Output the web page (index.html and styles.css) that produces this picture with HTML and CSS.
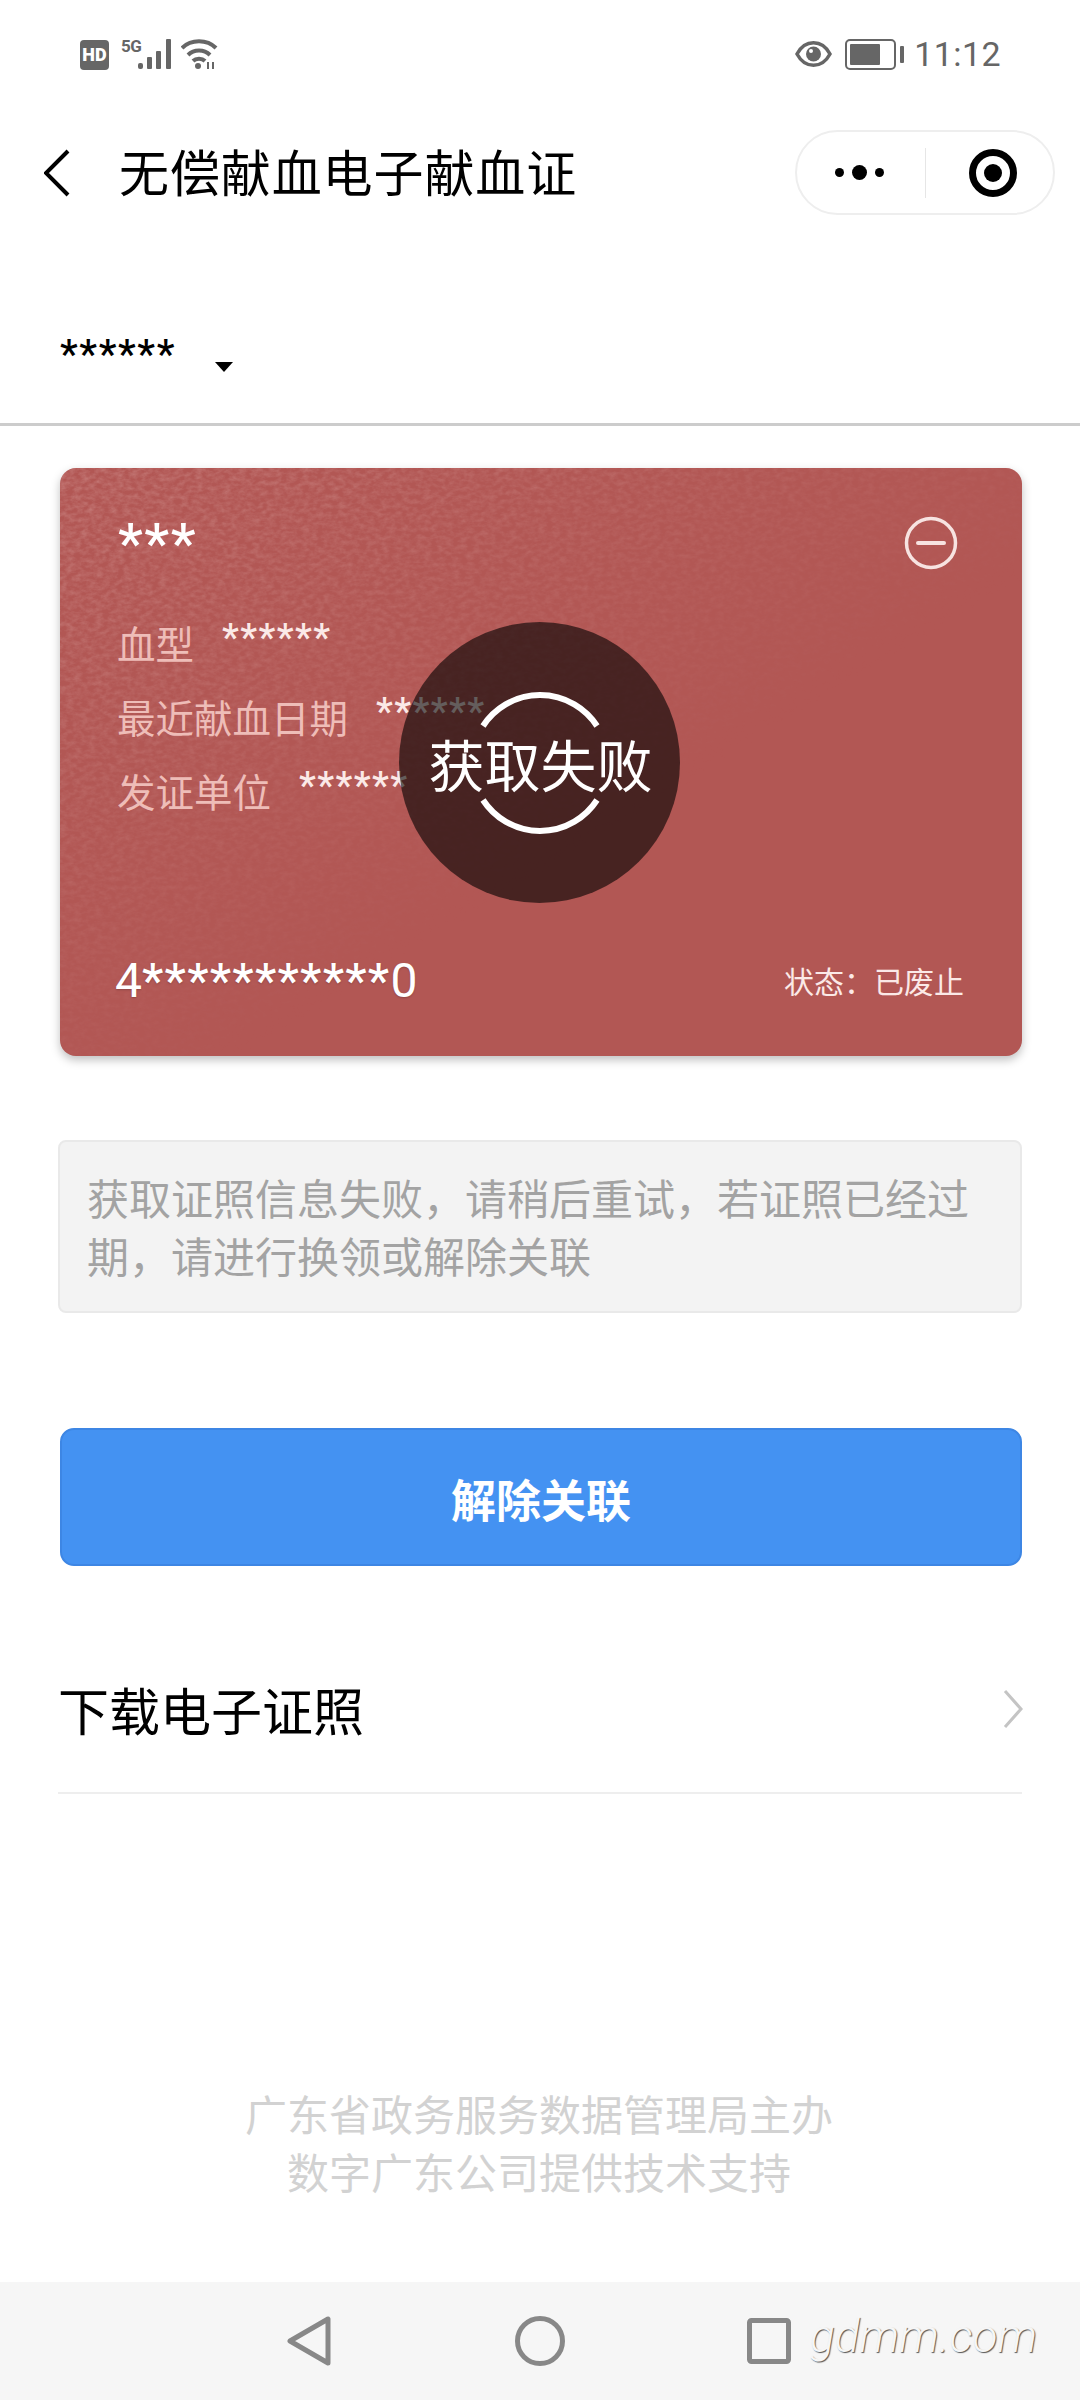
FILE: index.html
```html
<!DOCTYPE html>
<html lang="zh-CN">
<head>
    <meta charset="UTF-8">
    <meta name="viewport" content="width=device-width, initial-scale=1.0">
    <title>无偿献血电子献血证</title>
    <link rel="stylesheet" href="styles.css">
</head>
<body>
    <div class="page">
        <div class="status-bar">
            <div class="status-left">
                <span class="hd-badge">HD</span>
                <span class="net-label">5G</span>
                <svg class="signal" width="33" height="32" viewBox="0 0 33 32">
                    <rect x="0" y="25" width="5" height="6" rx="2"/>
                    <rect x="9" y="19" width="5" height="12" rx="1"/>
                    <rect x="18" y="13" width="5" height="18" rx="1"/>
                    <rect x="28" y="1" width="5" height="30" rx="1"/>
                </svg>
                <svg class="wifi" width="37" height="32" viewBox="0 0 37 32" fill="none" stroke="#666" stroke-width="4">
                    <path d="M1 10C10 1 26 1 35 10"/>
                    <path d="M7 17C13 11 23 11 29 17"/>
                    <path d="M12 23C15 20 21 20 24 23"/>
                    <circle cx="17" cy="28" r="3" fill="#666" stroke="none"/>
                    <path d="M27 31V24M32 24V31" stroke-width="2"/>
                </svg>
            </div>
            <div class="status-right">
                <svg class="eye" width="37" height="28" viewBox="0 0 37 28">
                    <path d="M2 14C10 -1 27 -1 35 14C27 29 10 29 2 14Z" fill="none" stroke="#666" stroke-width="3.5"/>
                    <circle cx="18.5" cy="14" r="7.5" fill="#666"/>
                    <circle cx="16" cy="11" r="2" fill="#fff"/>
                </svg>
                <div class="battery">
                    <div class="battery-body"><div class="battery-fill"></div></div>
                    <div class="battery-nub"></div>
                </div>
                <span class="clock">11:12</span>
            </div>
        </div>

        <div class="nav-bar">
            <svg class="nav-back" width="26" height="48" viewBox="0 0 26 48" fill="none" stroke="#000" stroke-width="4">
                <path d="M24 2L2 24L24 46"/>
            </svg>
            <h1 class="nav-title">无偿献血电子献血证</h1>
            <div class="capsule">
                <div class="capsule-more">
                    <span class="dot"></span><span class="dot dot-big"></span><span class="dot"></span>
                </div>
                <div class="capsule-line"></div>
                <svg class="capsule-close" width="48" height="48" viewBox="0 0 48 48">
                    <circle cx="24" cy="24" r="20.5" fill="none" stroke="#000" stroke-width="7"/>
                    <circle cx="24" cy="24" r="9" fill="#000"/>
                </svg>
            </div>
        </div>

        <div class="picker">
            <span class="picker-value">******</span>
            <span class="picker-caret"></span>
        </div>

        <div class="content">
            <div class="license-card">
                <svg class="card-grain" width="962" height="588">
                    <filter id="grain">
                        <feTurbulence type="fractalNoise" baseFrequency="0.14 0.22" numOctaves="3"/>
                        <feColorMatrix values="0 0 0 0 1  0 0 0 0 0.8  0 0 0 0 0.8  0.4 0 0 0 -0.13"/>
                    </filter>
                    <linearGradient id="fade" x1="0" y1="0" x2="0.6" y2="0.6">
                        <stop offset="0" stop-color="#fff"/>
                        <stop offset="1" stop-color="#000"/>
                    </linearGradient>
                    <mask id="fadeMask"><rect width="962" height="588" fill="url(#fade)"/></mask>
                    <rect width="962" height="588" filter="url(#grain)" mask="url(#fadeMask)"/>
                </svg>
                <div class="card-head">
                    <span class="card-name">***</span>
                    <svg class="card-minus" width="54" height="54" viewBox="0 0 54 54" fill="none" stroke="#f7e3e1">
                        <circle cx="27" cy="27" r="24.5" stroke-width="3.5"/>
                        <path d="M14 27H40" stroke-width="4" stroke-linecap="round"/>
                    </svg>
                </div>
                <div class="card-info">
                    <div class="info-row"><span class="info-label">血型</span><span class="info-value">******</span></div>
                    <div class="info-row"><span class="info-label">最近献血日期</span><span class="info-value">******</span></div>
                    <div class="info-row"><span class="info-label">发证单位</span><span class="info-value">******</span></div>
                </div>
                <div class="card-foot">
                    <span class="card-number">4<span class="card-stars">***********</span>0</span>
                    <span class="card-state">状态：已废止</span>
                </div>
                <div class="fail-mask">
                    <svg class="fail-ring" width="150" height="150" viewBox="0 0 150 150" fill="none" stroke="#fff" stroke-width="6">
                        <path d="M18 38A68 68 0 0 1 132 38"/>
                        <path d="M18 112A68 68 0 0 0 132 112"/>
                    </svg>
                    <span class="fail-text">获取失败</span>
                </div>
            </div>

            <div class="notice">获取证照信息失败，请稍后重试，若证照已经过期，请进行换领或解除关联</div>

            <button class="unlink-btn">解除关联</button>

            <div class="list-row">
                <span class="list-label">下载电子证照</span>
                <svg class="list-arrow" width="20" height="40" viewBox="0 0 20 40" fill="none" stroke="#c4c4c4" stroke-width="3">
                    <path d="M2 2L18 20L2 38"/>
                </svg>
            </div>
        </div>

        <div class="credits">
            <p>广东省政务服务数据管理局主办</p>
            <p>数字广东公司提供技术支持</p>
        </div>

        <div class="system-nav">
            <svg class="sys-back" width="44" height="50" viewBox="0 0 44 50" fill="none" stroke="#888" stroke-width="5" stroke-linejoin="round">
                <path d="M41 3V47L3 25Z"/>
            </svg>
            <svg class="sys-home" width="50" height="50" viewBox="0 0 50 50" fill="none" stroke="#888" stroke-width="5">
                <circle cx="25" cy="25" r="22.5"/>
            </svg>
            <svg class="sys-recent" width="44" height="46" viewBox="0 0 44 46" fill="none" stroke="#888" stroke-width="5" stroke-linejoin="round">
                <rect x="2.5" y="2.5" width="39" height="41" rx="2"/>
            </svg>
            <span class="watermark">gdmm.com</span>
        </div>
    </div>
</body>
</html>
```
FILE: styles.css
```css
* {
    box-sizing: border-box;
}

body {
    margin: 0;
    background-color: #fff;
    font-family: Roboto, 'Noto Sans CJK SC', sans-serif;
    color: #000;
}

.page {
    width: 1080px;
    height: 2400px;
    display: flex;
    flex-direction: column;
    overflow: hidden;
}

/* status bar */
.status-bar {
    height: 108px;
    flex-shrink: 0;
    display: flex;
    justify-content: space-between;
    align-items: center;
    padding: 0 79px 0 80px;
}

.status-left,
.status-right {
    display: flex;
    align-items: center;
}

.hd-badge {
    width: 29px;
    height: 30px;
    border-radius: 4px;
    background-color: #666;
    color: #fff;
    font-size: 18px;
    font-weight: 900;
    line-height: 30px;
    text-align: center;
    margin-top: 1px;
}

.net-label {
    width: 16px;
    margin: -16px 1px 0 12px;
    color: #666;
    font-size: 17px;
    font-weight: 700;
    line-height: 16px;
    white-space: nowrap;
    letter-spacing: -0.5px;
}

.signal {
    fill: #666;
}

.wifi {
    margin-left: 10px;
}

.battery {
    display: flex;
    align-items: center;
    margin-left: 13px;
}

.battery-body {
    width: 51px;
    height: 31px;
    padding: 3px;
    border: 2px solid #666;
    border-radius: 5px;
}

.battery-fill {
    width: 30px;
    height: 100%;
    background-color: #666;
    border-radius: 1px;
}

.battery-nub {
    width: 4px;
    height: 17px;
    margin-left: 4px;
    background-color: #666;
    border-radius: 1px;
}

.clock {
    margin-left: 10px;
    color: #666;
    font-size: 34px;
    letter-spacing: 0.4px;
}

/* title bar */
.nav-bar {
    height: 129px;
    flex-shrink: 0;
    display: flex;
    align-items: center;
    padding: 0 25px 0 44px;
}

.nav-title {
    margin: -6px 0 0 49px;
    font-size: 50px;
    font-weight: 400;
    letter-spacing: 0.9px;
    white-space: nowrap;
}

.capsule {
    width: 260px;
    height: 85px;
    margin-left: auto;
    display: flex;
    align-items: center;
    border: 2px solid #eee;
    border-radius: 43px;
}

.capsule-more {
    width: 128px;
    display: flex;
    justify-content: center;
    align-items: center;
    gap: 8px;
    padding-right: 4px;
}

.dot {
    width: 9px;
    height: 9px;
    border-radius: 50%;
    background-color: #000;
}

.dot-big {
    width: 15px;
    height: 15px;
}

.capsule-line {
    width: 1px;
    height: 50px;
    background-color: #e6e6e6;
}

.capsule-close {
    margin-left: 43px;
}

/* card picker */
.picker {
    height: 189px;
    flex-shrink: 0;
    display: flex;
    align-items: flex-start;
    gap: 39px;
    padding: 96px 0 0 60px;
    border-bottom: 3px solid #ccc;
}

.picker-value {
    font-size: 40px;
    font-weight: 500;
    letter-spacing: 1.6px;
    line-height: 44px;
}

.picker-caret {
    width: 0;
    height: 0;
    margin-top: 29px;
    border-style: solid;
    border-width: 10px 9px 0 9px;
    border-color: #000 transparent transparent transparent;
}

.content {
    padding: 0 58px 0 58px;
}

/* license card */
.license-card {
    position: relative;
    height: 588px;
    margin: 42px 0 0 2px;
    padding: 48px 58px 50px 57px;
    display: flex;
    flex-direction: column;
    border-radius: 16px;
    background-color: #b25754;
    box-shadow: 0 4px 10px rgba(0, 0, 0, 0.25);
}

.card-grain {
    position: absolute;
    top: 0;
    left: 0;
    border-radius: 16px;
}

.card-head {
    position: relative;
    height: 54px;
    display: flex;
    justify-content: space-between;
    align-items: flex-start;
}

.card-name {
    margin: 6px 0 0 1px;
    color: #fff;
    font-size: 56px;
    font-weight: 500;
    letter-spacing: 1.5px;
    line-height: 44px;
}

.card-minus {
    margin-right: 6px;
}

.card-info {
    position: relative;
    margin-top: 35px;
}

.info-row {
    height: 74px;
    display: flex;
    align-items: center;
    gap: 28px;
}

.info-label {
    color: #eebdb8;
    font-size: 38.5px;
}

.info-value {
    margin-top: -8px;
    color: #fbe9e7;
    font-size: 38px;
    font-weight: 500;
    letter-spacing: 1.4px;
}

.card-foot {
    position: relative;
    margin-top: auto;
    height: 52px;
    display: flex;
    justify-content: space-between;
    align-items: center;
}

.card-number {
    margin-left: -2px;
    color: #fff;
    font-size: 48px;
    text-shadow: 0 1px 2px rgba(0, 0, 0, 0.2);
}

.card-stars {
    font-weight: 500;
    letter-spacing: 1.3px;
}

.card-state {
    color: #fbe9e7;
    font-size: 30px;
}

.fail-mask {
    position: absolute;
    top: 0;
    bottom: 0;
    left: 0;
    right: 3px;
    width: 281px;
    height: 281px;
    margin: auto;
    display: flex;
    justify-content: center;
    align-items: center;
    border-radius: 50%;
    background-color: rgba(0, 0, 0, 0.6);
}

.fail-ring {
    position: absolute;
    top: 66px;
    left: 66px;
}

.fail-text {
    position: relative;
    margin-left: 2px;
    color: #fff;
    font-size: 56px;
    white-space: nowrap;
}

/* notice and actions */
.notice {
    height: 173px;
    margin-top: 84px;
    padding: 30px 27px 0 27px;
    background-color: #f3f3f3;
    border: 2px solid #e9e9e9;
    border-radius: 8px;
    color: #a3a3a3;
    font-size: 42px;
    line-height: 58px;
}

.unlink-btn {
    display: block;
    width: 962px;
    height: 138px;
    margin: 115px 0 0 2px;
    padding-top: 3px;
    background-color: #4492f2;
    border: 2px solid #3d86e4;
    border-radius: 14px;
    color: #fff;
    font-family: inherit;
    font-size: 45px;
    font-weight: 700;
}

.list-row {
    height: 169px;
    margin-top: 59px;
    display: flex;
    justify-content: space-between;
    align-items: center;
    border-bottom: 2px solid #eee;
}

.list-label {
    font-size: 51px;
}

.list-arrow {
    margin-right: -1px;
}

/* footer */
.credits {
    margin-top: auto;
    margin-bottom: 78px;
    padding-right: 2px;
    color: #d2d2d2;
    font-size: 42px;
    line-height: 58px;
    text-align: center;
}

.credits p {
    margin: 0;
}

.system-nav {
    height: 118px;
    flex-shrink: 0;
    display: flex;
    align-items: center;
    padding-left: 287px;
    background-color: #f6f6f6;
}

.sys-home {
    margin-left: 184px;
}

.sys-recent {
    margin-left: 182px;
}

.watermark {
    margin: -10px 0 0 19px;
    color: #f6f6f6;
    font-family: Roboto, sans-serif;
    font-size: 46px;
    font-weight: 300;
    font-style: italic;
    text-shadow: 1px 1px 1px #555;
    white-space: nowrap;
}
```
